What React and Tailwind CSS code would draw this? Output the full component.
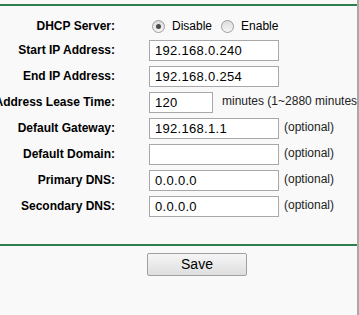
import { useState } from 'react'

const rows = [
  { label: 'Start IP Address:', value: '192.168.0.240', wide: true },
  { label: 'End IP Address:', value: '192.168.0.254', wide: true },
  { label: 'Address Lease Time:', value: '120', note: 'minutes (1~2880 minutes, the default value is 120)' },
  { label: 'Default Gateway:', value: '192.168.1.1', wide: true, note: '(optional)' },
  { label: 'Default Domain:', value: '', wide: true, note: '(optional)' },
  { label: 'Primary DNS:', value: '0.0.0.0', wide: true, note: '(optional)' },
  { label: 'Secondary DNS:', value: '0.0.0.0', wide: true, note: '(optional)' },
]

function Radio({ checked, onClick, label }) {
  return (
    <label className="flex items-center cursor-pointer" onClick={onClick}>
      <span className="flex h-[13px] w-[13px] items-center justify-center rounded-full border border-[#9c9c9c] bg-gradient-to-b from-[#dcdcdc] to-[#f6f6f6]">
        {checked && <span className="h-[5px] w-[5px] rounded-full bg-[#4a4a4a]" />}
      </span>
      <span className="ml-[7px] text-[12px] text-black">{label}</span>
    </label>
  )
}

export default function App() {
  const [dhcp, setDhcp] = useState('disable')
  const [values, setValues] = useState(rows.map((r) => r.value))

  return (
    <div
      className="flex h-[315px] w-[359px] overflow-hidden bg-[#f9f9f9]"
      style={{ fontFamily: '"Liberation Sans", Arial, sans-serif' }}
    >
      <div className="flex w-[357px] flex-col">
        {/* Top rule */}
        <div className="mt-[4px] h-[2px] bg-[#2e7f4f]" />

        {/* DHCP Server */}
        <div className="mt-[9px] flex h-[22px] items-center">
          <div className="flex w-[115px] shrink-0 justify-end whitespace-nowrap text-[12px] font-bold text-black">
            DHCP Server:
          </div>
          <div className="ml-[37px] flex items-center gap-[9px]">
            <Radio checked={dhcp === 'disable'} onClick={() => setDhcp('disable')} label="Disable" />
            <Radio checked={dhcp === 'enable'} onClick={() => setDhcp('enable')} label="Enable" />
          </div>
        </div>

        {/* Fields */}
        {rows.map((row, i) => (
          <div key={row.label} className="flex h-[26px] items-start">
            <div className="mt-[6px] flex w-[115px] shrink-0 justify-end whitespace-nowrap text-[12px] leading-[15px] font-bold text-black">
              {row.label}
            </div>
            <input
              value={values[i]}
              onChange={(e) => setValues(values.map((v, j) => (j === i ? e.target.value : v)))}
              className={`ml-[34px] mt-[3px] h-[21px] shrink-0 border border-[#a8a8a8] bg-white px-[5px] text-[13px] tracking-[0.3px] text-black outline-none ${
                row.wide ? 'w-[130px]' : 'w-[64px]'
              }`}
            />
            {row.note && (
              <span
                className={`mt-[5px] whitespace-nowrap text-[12px] leading-[15px] text-[#222] ${
                  row.wide ? 'ml-[5px]' : 'ml-[9px]'
                }`}
              >
                {row.note}
              </span>
            )}
          </div>
        ))}

        {/* Bottom rule */}
        <div className="mt-[25px] h-[2px] bg-[#2e7f4f]" />

        <div className="flex pl-[147px] pt-[7px]">
          <button className="h-[23px] w-[100px] rounded-[2px] border border-[#a0a0a0] bg-gradient-to-b from-[#f6f6f6] to-[#dedede] text-[14px] text-black">
            Save
          </button>
        </div>
      </div>
      <div className="w-[2px] bg-[#a9a9a9]" />
    </div>
  )
}
